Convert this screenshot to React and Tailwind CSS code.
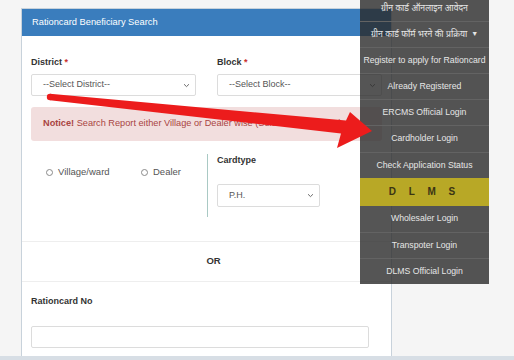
import React from "react";

function Chevron({ className = "" }) {
  return (
    <svg viewBox="0 0 10 6" className={className} fill="none" stroke="#666" strokeWidth="1.4">
      <path d="M1.5 1.2 5 4.6 8.5 1.2" />
    </svg>
  );
}

function Select({ value, className = "" }) {
  return (
    <div className={"flex items-center justify-between rounded-[2px] border border-[#dcdcdc] bg-white pl-[11px] pr-[5px] text-[9px] text-[#555] " + className}>
      <span>{value}</span>
      <Chevron className="w-[7px] h-[5px]" />
    </div>
  );
}

function Radio({ label }) {
  return (
    <div className="flex items-center gap-[5px] text-[9.5px] text-[#555]">
      <span className="w-[7px] h-[7px] rounded-full border border-[#8a8a8a] bg-white" />
      <span>{label}</span>
    </div>
  );
}

const menu = [
  "ग्रीन कार्ड ऑनलाइन आवेदन",
  "ग्रीन कार्ड फॉर्म भरने की प्रक्रिया",
  "Register to apply for Rationcard",
  "Already Registered",
  "ERCMS Official Login",
  "Cardholder Login",
  "Check Application Status",
  "DLMS",
  "Wholesaler Login",
  "Transpoter Login",
  "DLMS Official Login",
];

export default function App() {
  return (
    <div className="relative w-[514px] h-[360px] overflow-hidden bg-[#f5f5f5] font-['Liberation_Sans',Arial,'Noto_Sans',sans-serif] flex flex-col">
      <div className="flex-1 pt-[8px] pl-[21px]">
        <div className="w-[371px] h-full border border-b-0 border-[#c8d2db] bg-white">
          <div className="h-[27px] bg-[#3a7dbd] px-[10px] flex items-center text-white text-[9.3px]">
            Rationcard Beneficiary Search
          </div>

          <div className="px-[9px] pt-[20px]">
            <div className="grid grid-cols-2 gap-x-[21px]">
              <div>
                <div className="h-[12px] leading-[12px] text-[9px] font-bold text-[#333] mb-[6px]">
                  District <span className="text-[#c9302c]">*</span>
                </div>
                <Select value="--Select District--" className="h-[22px]" />
              </div>
              <div>
                <div className="h-[12px] leading-[12px] text-[9px] font-bold text-[#333] mb-[6px]">
                  Block <span className="text-[#c9302c]">*</span>
                </div>
                <Select value="--Select Block--" className="h-[22px]" />
              </div>
            </div>

            <div className="mt-[11px] h-[34px] rounded-[3px] bg-[#f2dede] pl-[12px] flex items-center text-[9.2px] text-[#a94442] whitespace-nowrap overflow-hidden">
              <b>Notice!</b>&nbsp;Search Report either Village or Dealer wise (Select Radio button)
            </div>

            <div className="mt-[13px] flex h-[63px]">
              <div className="w-[176px] flex items-start pl-[15px] pt-[11px]">
                <div className="w-[95px]">
                  <Radio label="Village/ward" />
                </div>
                <Radio label="Dealer" />
              </div>
              <div className="border-l border-[#a9c9c4]" />
              <div className="pl-[9px]">
                <div className="h-[12px] leading-[12px] text-[9px] font-bold text-[#333] mb-[18px]">Cardtype</div>
                <Select value="P.H." className="h-[23px] w-[103px]" />
              </div>
            </div>
          </div>

          <div className="mt-[24px] h-[41px] border-y border-[#eeeeee] flex items-center justify-center pl-[14px] text-[9.5px] font-bold text-[#333]">
            OR
          </div>

          <div className="px-[9px] pt-[13px]">
            <div className="h-[12px] leading-[12px] text-[9px] font-bold text-[#333] mb-[19px]">Rationcard No</div>
            <div className="h-[22px] w-[338px] rounded-[2px] border border-[#dcdcdc] bg-white" />
          </div>
        </div>
      </div>
      <div className="h-[4px] bg-[#d7dee5]" />

      <div className="absolute left-[360px] top-[-5px] w-[129px] bg-[rgba(42,42,42,0.8)]">
        {menu.map((m, i) =>
          m === "DLMS" ? (
            <div key={i} className="h-[28px] bg-[#b8a826] flex items-center justify-center text-[10px] font-bold tracking-[5px] text-[#3b3414]">
              D L M S
            </div>
          ) : (
            <div
              key={i}
              className={"h-[26.1px] flex items-center justify-center text-[8.7px] text-[#e6e6e6] whitespace-nowrap " + (i > 0 && menu[i - 1] !== "DLMS" ? "border-t border-[#636363]" : "")}
            >
              {m}
              {i === 1 && <span className="ml-[4px] text-[7px]">▼</span>}
            </div>
          )
        )}
      </div>

      <svg className="absolute inset-0 pointer-events-none" width="514" height="360" viewBox="0 0 514 360">
        <circle cx="50" cy="97" r="3.2" fill="#ec1c1c" />
        <polygon
          points="50,93.8 346,120.5 350,112 372,131 337,148 341,133.5 50,100.2"
          fill="#ec1c1c"
        />
      </svg>
    </div>
  );
}
